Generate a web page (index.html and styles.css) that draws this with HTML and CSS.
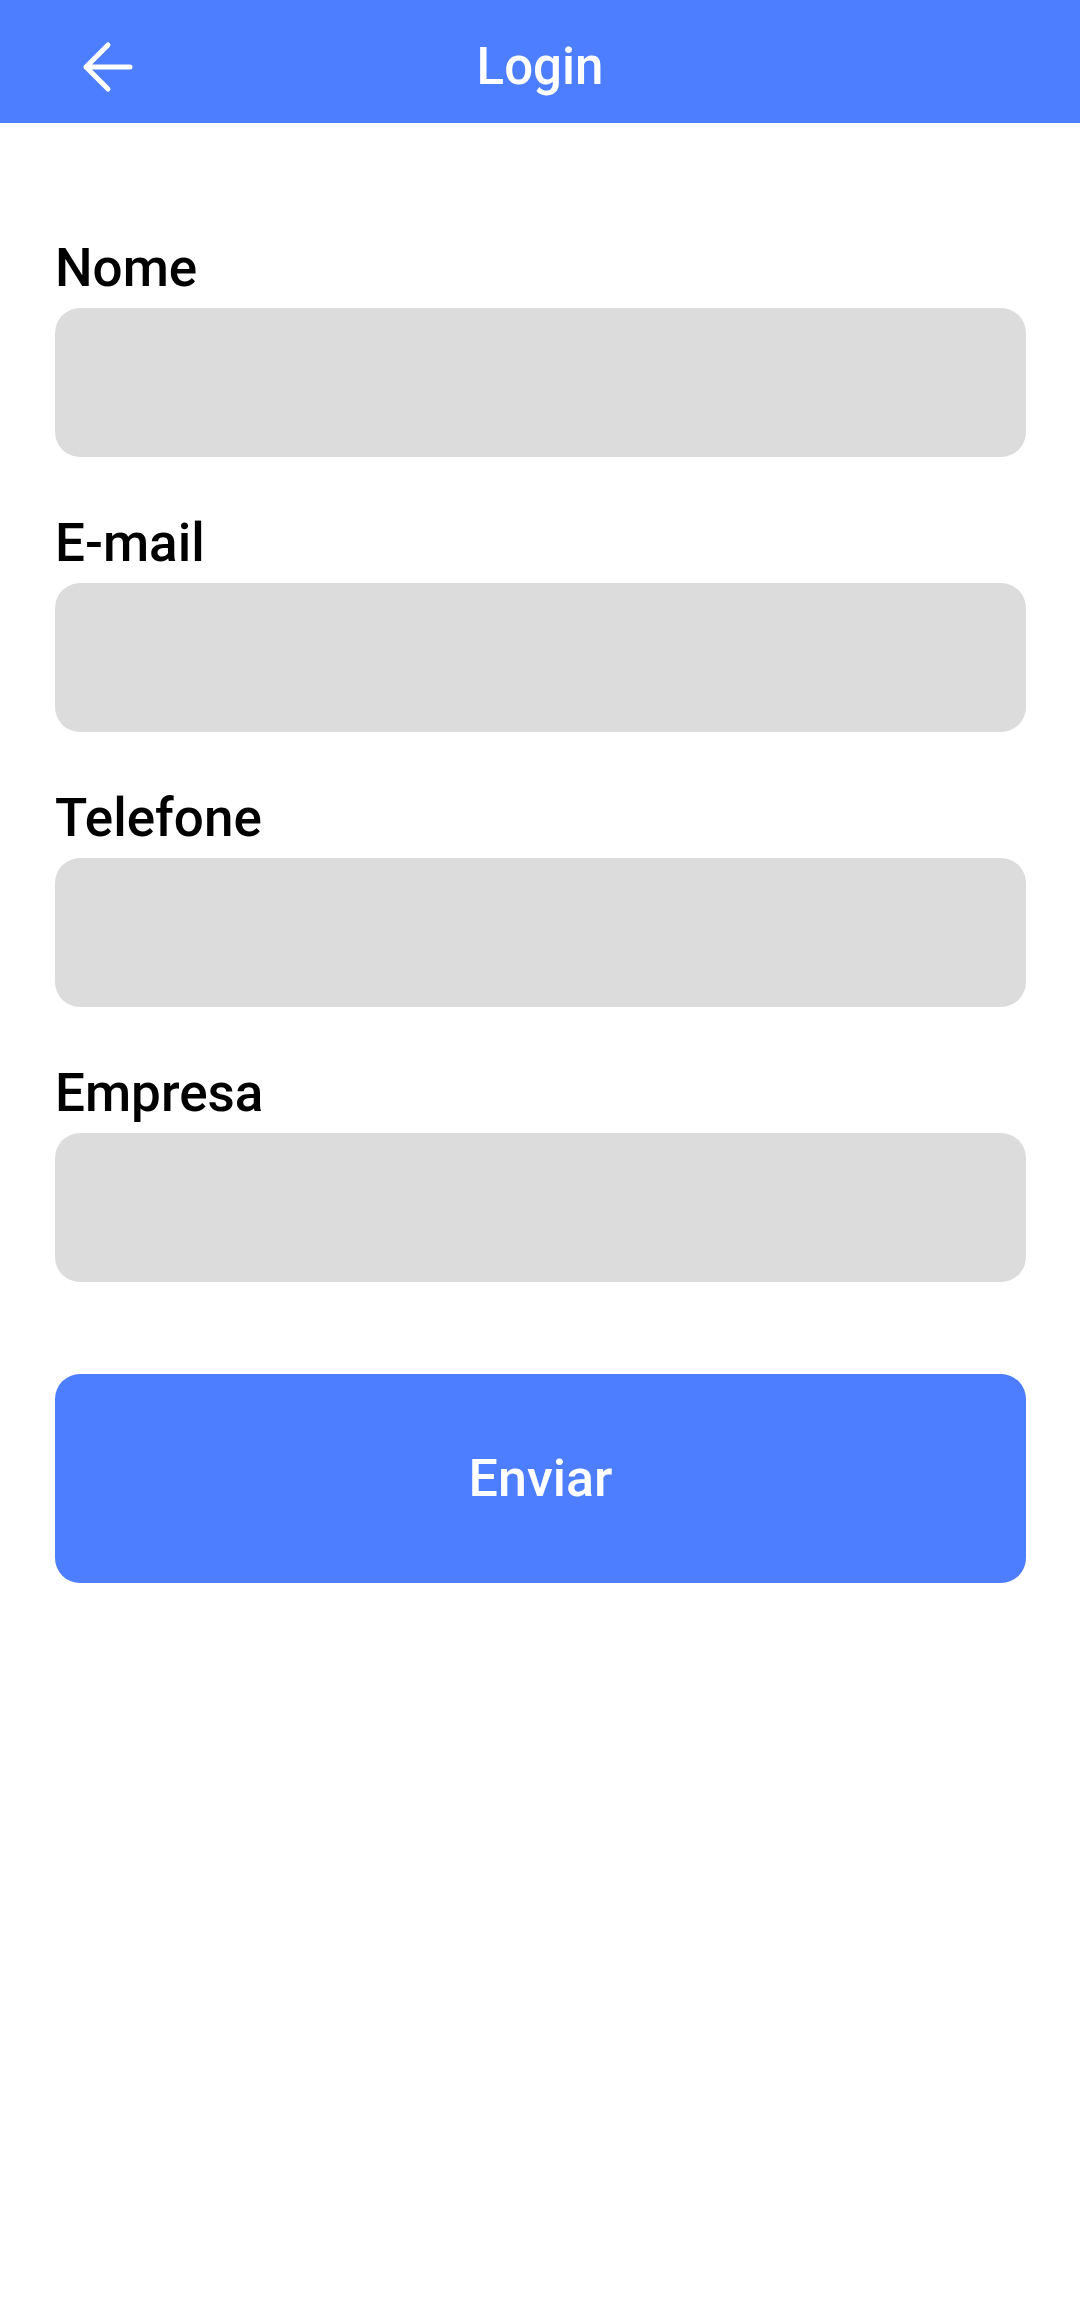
FILE: index.html
```html
<!DOCTYPE html>
<html lang="pt">
<head>
<meta charset="utf-8">
<title>Login</title>
<link rel="stylesheet" href="styles.css">
</head>
<body>
<header class="appbar">
  <div class="appbar-left">
    <svg class="back-icon" width="56" height="56" viewBox="0 0 56 56" aria-hidden="true">
      <path d="M50 28H6M28 6L6 28L28 50" fill="none" stroke="#ffffff" stroke-width="5" stroke-linecap="round" stroke-linejoin="round"/>
    </svg>
  </div>
  <h1 class="appbar-title">Login</h1>
  <div class="appbar-right"></div>
</header>
<main class="form">
  <div class="field">
    <label class="field-label">Nome</label>
    <div class="field-input"></div>
  </div>
  <div class="field">
    <label class="field-label">E-mail</label>
    <div class="field-input"></div>
  </div>
  <div class="field">
    <label class="field-label">Telefone</label>
    <div class="field-input"></div>
  </div>
  <div class="field">
    <label class="field-label">Empresa</label>
    <div class="field-input"></div>
  </div>
  <button class="submit" type="button">Enviar</button>
</main>
</body>
</html>
```
FILE: styles.css
```css
* { box-sizing: border-box; }
html, body {
  margin: 0;
  padding: 0;
  background: #ffffff;
  font-family: Roboto, "Noto Sans", "Liberation Sans", sans-serif;
}
.appbar {
  height: 123px;
  padding-top: 10px;
  background: #4c7eff;
  display: grid;
  grid-template-columns: 1fr auto 1fr;
  align-items: center;
}
.appbar-left {
  padding-left: 80px;
  display: flex;
  align-items: center;
}
.back-icon { display: block; }
.appbar-title {
  margin: 0;
  font-size: 51px;
  font-weight: 500;
  color: #ffffff;
  line-height: 61px;
}
.form {
  padding: 113px 54px 0 55px;
  display: flex;
  flex-direction: column;
  gap: 54px;
}
.field {
  display: flex;
  flex-direction: column;
}
.field-label {
  font-size: 53px;
  font-weight: 500;
  line-height: 64px;
  color: #000000;
  margin-bottom: 8px;
}
.field-input {
  height: 149px;
  background: #dcdcdc;
  border-radius: 25px;
}
.submit {
  margin-top: 38px;
  height: 209px;
  border: none;
  border-radius: 25px;
  background: #4c7eff;
  color: #ffffff;
  font-family: Roboto, "Noto Sans", "Liberation Sans", sans-serif;
  font-size: 52px;
  font-weight: 500;
  padding: 0;
}
```
